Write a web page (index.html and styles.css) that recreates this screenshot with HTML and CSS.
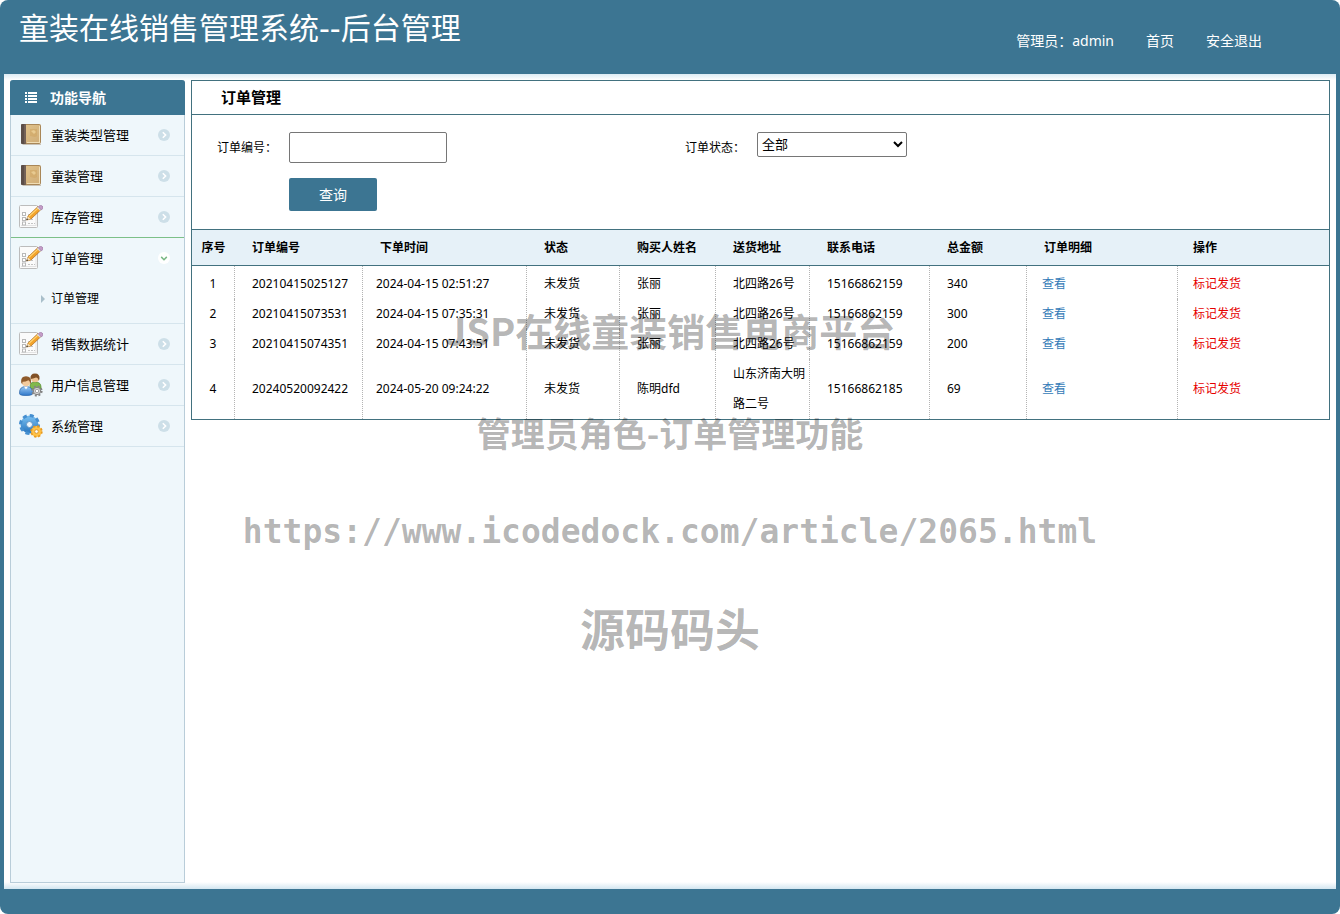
FILE: index.html
```html
<!DOCTYPE html>
<html lang="zh-CN">
<head>
<meta charset="utf-8">
<title>童装在线销售管理系统</title>
<link rel="stylesheet" href="styles.css">
</head>
<body>
<svg class="defs" aria-hidden="true">
  <defs>
    <linearGradient id="cover" x1="0" y1="0" x2="1" y2="1"><stop offset="0" stop-color="#e2c48d"/><stop offset="1" stop-color="#cfac76"/></linearGradient>
    <linearGradient id="shirt" x1="0" y1="0" x2="0" y2="1"><stop offset="0" stop-color="#9ccbf5"/><stop offset="1" stop-color="#2e77c9"/></linearGradient>
    <linearGradient id="gearblue" x1="0" y1="0" x2="0" y2="1"><stop offset="0" stop-color="#6fb6ea"/><stop offset="1" stop-color="#3480c6"/></linearGradient>
    <symbol id="book" viewBox="0 0 24 24">
      <path d="M3 21h19v1H4z" fill="#c9c3b8"/>
      <rect x="2.500" y="1.500" width="19" height="19" rx="1" fill="url(#cover)" stroke="#a98758"/>
      <rect x="2" y="1" width="5" height="20" rx="1" fill="#5c4e48"/>
      <path d="M6 1.500v19" stroke="#8a7566"/>
      <path d="M8 19.500h13M20.500 3v16" stroke="#f0ddb5"/>
      <path d="M11 6h7v7l-2 1-5-1z" fill="#cfa35e" opacity=".5"/>
      <path d="M12 8l3-1 2 2-2 2z" fill="#e8ca90"/>
    </symbol>
    <symbol id="note" viewBox="0 0 24 24">
      <rect x=".5" y=".5" width="18" height="22" rx="1" fill="#fbfbfb" stroke="#bcbcbc"/>
      <path d="M2 20.500h15M17 4v17" stroke="#e3e3e3"/>
      <g fill="#fff" stroke="#b9b9b9"><rect x="3.500" y="7.500" width="3" height="3"/><rect x="3.500" y="12.500" width="3" height="3"/><rect x="3.500" y="17" width="3" height="3"/></g>
      <path d="M9 9.500h2M9 14.500h6M9 18.500h7" stroke="#c4c4c4" stroke-dasharray="2 1"/>
      <path d="M7.500 15l1.500-4L19 1.500l3 3L12 14z" fill="#f3a32a" stroke="#a9671b" stroke-width=".7"/>
      <path d="M10 11.300L19.600 2.600" stroke="#ffd574" stroke-width="1.200"/>
      <path d="M7.500 15l1.400-3.800 2.700 2.800z" fill="#f3dfba"/><path d="M7.300 15.300l.8-2 1.200 1.200z" fill="#333"/>
      <path d="M18 2.800l3 3 1.200-1.200-3-3z" fill="#d8dbe2"/>
      <path d="M19.300 1.700l1.200-1q1.200-1 2.700.3t.4 2.700l-1.300 1.400z" fill="#c49cc8" stroke="#8d6693" stroke-width=".5"/>
    </symbol>
    <symbol id="users" viewBox="0 0 24 24">
      <path d="M11 13q0-4 5-4 6 0 6 5v2H12z" fill="#81b94c" stroke="#4f852a" stroke-width=".7"/>
      <circle cx="16" cy="5.200" r="4" fill="#efc493"/>
      <path d="M11.500 6Q11 .5 16 .5T20.500 6l-.8 1.700Q19 4.500 17 4.500q-3 1-5.500 1.500z" fill="#815126"/>
      <path d="M.5 20.500q-.5-7 6.500-7t6.500 7q0 2-6.500 2t-6.500-2z" fill="url(#shirt)" stroke="#2762a7" stroke-width=".7"/>
      <path d="M5 13.500l2 3 2-3z" fill="#fff"/>
      <circle cx="7" cy="8.800" r="4.500" fill="#f3ca9c"/>
      <path d="M2.200 9.500Q1.500 3.200 7 3.200t5 6l-.7 2Q11 7.700 9.500 7.200 6 9 3.500 8.800l-.3 2.500z" fill="#8e5a2b"/>
      <g fill="#d2d2d2" stroke="#838383"><circle cx="18" cy="18" r="3.700"/><circle cx="18" cy="18" r="4.700" fill="none" stroke-width="1.800" stroke-dasharray="2 1.700"/></g>
      <circle cx="18" cy="18" r="1.700" fill="#fff" stroke="#888" stroke-width=".7"/>
    </symbol>
    <symbol id="gears" viewBox="0 0 24 24">
      <circle cx="10.500" cy="10.500" r="6" fill="none" stroke="url(#gearblue)" stroke-width="6"/>
      <circle cx="10.500" cy="10.500" r="9" fill="none" stroke="#458fd0" stroke-width="3" stroke-dasharray="4 3.070"/>
      <circle cx="10.500" cy="10.500" r="3" fill="#eef7fc" stroke="#3877b5" stroke-width=".7"/>
      <circle cx="17.500" cy="17.500" r="3.600" fill="#fff" stroke="#ffc247" stroke-width="3.600"/>
      <circle cx="17.500" cy="17.500" r="5.300" fill="none" stroke="#e89a20" stroke-width="1.800" stroke-dasharray="2.300 1.860"/>
      <circle cx="17.500" cy="17.500" r="1.800" fill="#fff" stroke="#c77f16" stroke-width=".7"/>
    </symbol>
    <symbol id="more" viewBox="0 0 12 12"><circle cx="6" cy="6" r="6" fill="#cddfe8"/><path d="M4.800 3.200L7.600 6 4.800 8.800" fill="none" stroke="#fff" stroke-width="1.600"/></symbol>
    <symbol id="open" viewBox="0 0 12 12"><circle cx="6" cy="6" r="6" fill="#fff"/><path d="M3.200 4.900L6 7.700l2.800-2.800" fill="none" stroke="#79b885" stroke-width="1.500"/></symbol>
  </defs>
</svg>

<div class="app">
  <header class="top">
    <h1 class="brand">童装在线销售管理系统--后台管理</h1>
    <nav class="account">
      <span>管理员：admin</span>
      <a href="#">首页</a>
      <a href="#">安全退出</a>
    </nav>
  </header>

  <div class="body">
    <aside class="side">
      <h2 class="side-title">
        <svg class="list-icon" viewBox="0 0 12 11"><path d="M0 1h2M3 1h9M0 4h2M3 4h9M0 7h2M3 7h9M0 10h2M3 10h9" stroke="#fff" stroke-width="2"/></svg>
        功能导航
      </h2>
      <ul class="menu">
        <li><a href="#"><svg class="icon"><use href="#book"/></svg><span>童装类型管理</span><svg class="arrow"><use href="#more"/></svg></a></li>
        <li><a href="#"><svg class="icon"><use href="#book"/></svg><span>童装管理</span><svg class="arrow"><use href="#more"/></svg></a></li>
        <li class="before-open"><a href="#"><svg class="icon"><use href="#note"/></svg><span>库存管理</span><svg class="arrow"><use href="#more"/></svg></a></li>
        <li>
          <a href="#"><svg class="icon"><use href="#note"/></svg><span>订单管理</span><svg class="arrow"><use href="#open"/></svg></a>
          <ul class="submenu"><li><a href="#"><svg class="caret" viewBox="0 0 4 8"><path d="M0 0l4 4-4 4z" fill="#a9bfca"/></svg>订单管理</a></li></ul>
        </li>
        <li><a href="#"><svg class="icon"><use href="#note"/></svg><span>销售数据统计</span><svg class="arrow"><use href="#more"/></svg></a></li>
        <li><a href="#"><svg class="icon"><use href="#users"/></svg><span>用户信息管理</span><svg class="arrow"><use href="#more"/></svg></a></li>
        <li><a href="#"><svg class="icon"><use href="#gears"/></svg><span>系统管理</span><svg class="arrow"><use href="#more"/></svg></a></li>
      </ul>
    </aside>

    <main class="panel">
      <h2 class="panel-title">订单管理</h2>
      <form class="filter">
        <label for="order-no">订单编号：</label>
        <input id="order-no" type="text">
        <label for="order-state">订单状态：</label>
        <select id="order-state"><option>全部</option></select>
        <button type="button">查询</button>
      </form>
      <table class="orders">
        <colgroup><col class="w-no"><col class="w-order"><col class="w-time"><col class="w-state"><col class="w-name"><col class="w-addr"><col class="w-phone"><col class="w-sum"><col class="w-detail"><col class="w-action"></colgroup>
        <thead>
          <tr><th>序号</th><th>订单编号</th><th>下单时间</th><th>状态</th><th>购买人姓名</th><th>送货地址</th><th>联系电话</th><th>总金额</th><th>订单明细</th><th class="op">操作</th></tr>
        </thead>
        <tbody>
          <tr><td>1</td><td>20210415025127</td><td class="time">2024-04-15 02:51:27</td><td>未发货</td><td>张丽</td><td>北四路26号</td><td>15166862159</td><td>340</td><td class="op"><a href="#">查看</a></td><td class="op"><a class="ship" href="#">标记发货</a></td></tr>
          <tr><td>2</td><td>20210415073531</td><td class="time">2024-04-15 07:35:31</td><td>未发货</td><td>张丽</td><td>北四路26号</td><td>15166862159</td><td>300</td><td class="op"><a href="#">查看</a></td><td class="op"><a class="ship" href="#">标记发货</a></td></tr>
          <tr><td>3</td><td>20210415074351</td><td class="time">2024-04-15 07:43:51</td><td>未发货</td><td>张丽</td><td>北四路26号</td><td>15166862159</td><td>200</td><td class="op"><a href="#">查看</a></td><td class="op"><a class="ship" href="#">标记发货</a></td></tr>
          <tr><td>4</td><td>20240520092422</td><td class="time">2024-05-20 09:24:22</td><td>未发货</td><td>陈明dfd</td><td>山东济南大明路二号</td><td>15166862185</td><td>69</td><td class="op"><a href="#">查看</a></td><td class="op"><a class="ship" href="#">标记发货</a></td></tr>
        </tbody>
      </table>
    </main>
  </div>

  <div class="watermark">
    <p class="wm-title">JSP在线童装销售电商平台</p>
    <p class="wm-role">管理员角色-订单管理功能</p>
    <p class="wm-url">https://www.icodedock.com/article/2065.html</p>
    <p class="wm-site">源码码头</p>
  </div>
</div>
</body>
</html>
```
FILE: styles.css
```css
* { box-sizing: border-box; }
body, h1, h2, p, ul { margin: 0; padding: 0; }
ul { list-style: none; }
a { color: inherit; text-decoration: none; }

body {
  background: #fff;
  color: #000;
  font: 12px/30px "Noto Sans", "Noto Sans CJK SC", sans-serif;
}
.defs { position: absolute; width: 0; height: 0; }

.app {
  position: relative;
  display: flex;
  flex-direction: column;
  min-height: 100vh;
  padding: 0 4px 25px;
  background: #3c7592;
  border-radius: 8px;
}

/* header */
.top {
  display: flex;
  justify-content: space-between;
  height: 74px;
  padding: 0 74px 0 15px;
  color: #fff;
}
.brand {
  font-family: "DejaVu Sans", "Noto Sans CJK SC", sans-serif;
  font-size: 30px;
  font-weight: 400;
  line-height: 58px;
}
.account { display: flex; gap: 32px; font-size: 14px; line-height: 82px; }

/* page body */
.body {
  flex: 1;
  display: flex;
  align-items: flex-start;
  gap: 6px;
  padding: 6px;
  background:
    linear-gradient(#dcecf4, #fff) top / 100% 6px no-repeat,
    linear-gradient(#fff, #d3e6f0) bottom / 100% 7px no-repeat,
    #fff;
}

/* sidebar */
.side {
  flex: none;
  align-self: stretch;
  width: 175px;
  border: 1px solid #b9cdd9;
  border-top: 0;
  border-radius: 3px 3px 0 0;
  background: #eff7fb;
}
.side-title {
  display: flex;
  align-items: center;
  gap: 13px;
  height: 35px;
  margin: 0 -1px;
  padding-left: 15px;
  border-radius: 3px 3px 0 0;
  background: #3c7592;
  color: #fff;
  font-size: 14px;
}
.list-icon { width: 12px; height: 11px; }
.menu { font-size: 13px; }
.menu > li { border-bottom: 1px solid #d6e5ed; }
.menu > .before-open { border-bottom-color: #7cc088; }
.menu > li > a {
  display: flex;
  align-items: center;
  gap: 8px;
  height: 40px;
  padding: 0 14px 0 8px;
}
.menu span { flex: 1; }
.icon { width: 24px; height: 24px; }
.arrow { width: 12px; height: 12px; }
.submenu { padding-bottom: 3px; font-size: 12px; }
.submenu a { display: flex; align-items: center; gap: 6px; height: 42px; padding-left: 30px; }
.caret { width: 4px; height: 8px; }

/* order panel */
.panel { flex: 1; min-width: 0; border: 1px solid #42717f; }
.panel-title {
  padding-left: 29px;
  border-bottom: 1px solid #42717f;
  font-size: 15px;
  line-height: 33px;
}
.filter {
  display: grid;
  grid-template-columns: 72px 396px 72px 1fr;
  row-gap: 15px;
  align-items: start;
  justify-items: start;
  padding: 17px 25px 18px;
}
.filter label { line-height: 31px; }
.filter input {
  width: 158px;
  height: 31px;
  border: 1px solid #767676;
  border-radius: 2px;
  background: #fff;
}
.filter select {
  width: 150px;
  height: 25px;
  padding: 0 0 2px;
  border: 1px solid #767676;
  border-radius: 2px;
  background: #fff;
  color: #000;
  font: 13px "Noto Sans", "Noto Sans CJK SC", sans-serif;
}
.filter button {
  grid-column: 2;
  width: 88px;
  height: 33px;
  padding: 0 0 2px;
  border: 0;
  border-radius: 2px;
  background: #3c7592;
  color: #fff;
  font: 14px "Noto Sans", "Noto Sans CJK SC", sans-serif;
}

.orders { width: 100%; border-collapse: separate; border-spacing: 0; table-layout: fixed; }
.w-no { width: 43px; }
.w-order { width: 128px; }
.w-time { width: 164px; }
.w-state { width: 93px; }
.w-name { width: 96px; }
.w-addr { width: 94px; }
.w-phone { width: 120px; }
.w-sum { width: 97px; }
.w-detail { width: 151px; }
.w-action { width: 151px; }
.orders th {
  height: 37px;
  padding: 0 0 0 17px;
  border: solid #42717f;
  border-width: 1px 0;
  background: #e6f1f8;
  text-align: left;
}
.orders td { padding: 0 3px 0 17px; border-right: 1px dotted #b4b4b4; }
.orders td:last-child { border-right: 0; }
.orders th:first-child, .orders td:first-child { padding: 0; text-align: center; }
.orders td.time { padding-left: 13px; }
.orders .op { padding-left: 15px; }
.orders td.op { color: #337ab7; }
.orders tbody tr:first-child td, .orders tbody tr:first-child td:first-child { padding-top: 3px; }
.orders .ship { color: #e60000; }

/* watermark laid over the page */
.watermark {
  position: absolute;
  top: 278px;
  left: 0;
  right: 0;
  color: rgba(0, 0, 0, .3);
  font-family: "Noto Sans CJK SC", sans-serif;
  font-weight: 700;
  text-align: center;
  pointer-events: none;
}
.wm-title { font-size: 38px; line-height: 104px; }
.wm-role { font-size: 34px; line-height: 102px; }
.wm-url { font-family: "DejaVu Sans Mono", monospace; font-size: 33px; line-height: 96px; }
.wm-site { font-size: 45px; line-height: 96px; }
```
